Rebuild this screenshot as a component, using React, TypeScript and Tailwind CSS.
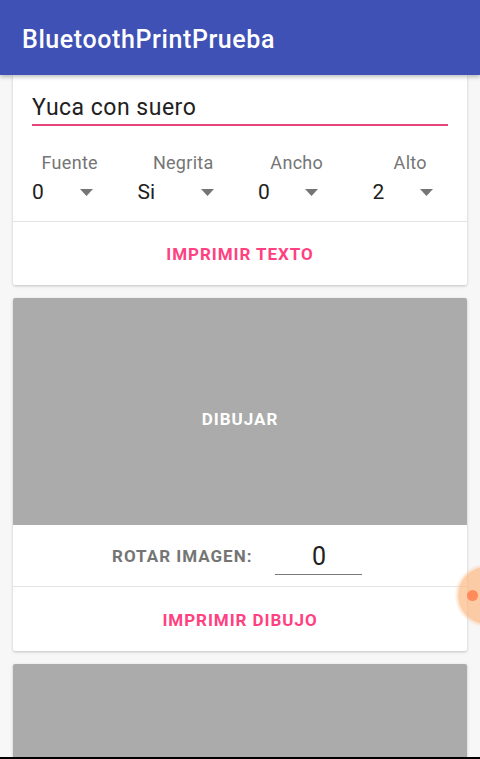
import React from "react";

function Arrow() {
  return (
    <svg width="13" height="7" viewBox="0 0 13 7" className="block">
      <path d="M0 0 L13 0 L6.5 7 Z" fill="#757575" />
    </svg>
  );
}

function Spinner({ value, box }: { value: string; box: string }) {
  return (
    <div className={`flex items-center justify-between ${box}`}>
      <span className="text-[21px] leading-[24px] text-[#212121]">{value}</span>
      <Arrow />
    </div>
  );
}

export default function App() {
  return (
    <div
      className="relative flex h-[759px] w-[480px] flex-col overflow-hidden bg-[#f7f7f7]"
      style={{ fontFamily: "Roboto, 'Noto Sans', sans-serif" }}
    >
      <div className="z-10 flex h-[75px] shrink-0 items-center bg-[#3F51B5] pl-[22px] pt-[4px] shadow-[0_2px_4px_rgba(0,0,0,0.25)]">
        <span className="text-[25px] font-medium leading-none tracking-[0.6px] text-white">BluetoothPrintPrueba</span>
      </div>
      <div className="flex flex-1 flex-col gap-[13px] overflow-hidden px-[13px]">
        {/* Card 1 */}
        <div className="shrink-0 rounded-b-[2px] bg-white shadow-[0_1px_3px_rgba(0,0,0,0.22)]">
          <div className="px-[19px] pt-[18px]">
            <div className="h-[30px] text-[23px] leading-[30px] tracking-[0.5px] text-[#212121]">Yuca con suero</div>
            <div className="mt-[1px] h-[2px] bg-[#E6457A]" />
          </div>
          <div className="mt-[27px] grid grid-cols-4 text-center text-[18px] leading-[20px] tracking-[0.3px] text-[#757575]">
            <span>Fuente</span>
            <span>Negrita</span>
            <span>Ancho</span>
            <span>Alto</span>
          </div>
          <div className="mt-[7px] grid grid-cols-4">
            <Spinner value="0" box="ml-[19px] w-[61px]" />
            <Spinner value="Si" box="ml-[11px] w-[76px]" />
            <Spinner value="0" box="ml-[18px] w-[60px]" />
            <Spinner value="2" box="ml-[19px] w-[60px]" />
          </div>
          <div className="mt-[17px] h-px bg-[#e4e4e4]" />
          <div className="flex h-[63px] items-center justify-center pt-[2px] text-[17px] font-bold tracking-[0.95px] text-[#FF4081]">
            IMPRIMIR TEXTO
          </div>
        </div>
        {/* Card 2 */}
        <div className="shrink-0 overflow-hidden rounded-[2px] bg-white shadow-[0_1px_3px_rgba(0,0,0,0.22)]">
          <div className="flex h-[227px] items-center justify-center bg-[#ababab] pt-[16px]">
            <span className="text-[17px] font-bold tracking-[1px] text-white">DIBUJAR</span>
          </div>
          <div className="flex h-[61px] items-center pl-[99px]">
            <span className="pt-[2px] text-[17px] font-bold tracking-[1px] text-[#757575]">ROTAR IMAGEN:</span>
            <div className="ml-[23px] flex w-[87px] flex-col items-center pt-[6px]">
              <span className="text-[25px] leading-[28px] text-[#212121]">0</span>
              <div className="mt-[3px] h-px w-full bg-[#7a7a7a]" />
            </div>
          </div>
          <div className="h-px bg-[#e4e4e4]" />
          <div className="flex h-[64px] items-center justify-center pt-[4px] text-[17px] font-bold tracking-[0.95px] text-[#FF4081]">
            IMPRIMIR DIBUJO
          </div>
        </div>
        {/* Card 3 */}
        <div className="h-[120px] shrink-0 rounded-[2px] bg-[#ababab] shadow-[0_1px_3px_rgba(0,0,0,0.22)]" />
      </div>
      <div className="h-[2px] shrink-0 bg-black" />
      {/* touch indicator */}
      <div className="absolute left-[458px] top-[567px] h-[57px] w-[57px] rounded-full bg-[rgba(252,180,120,0.65)] shadow-[0_0_2px_2px_rgba(252,190,140,0.4)]" />
      <div className="absolute left-[467px] top-[590px] h-[11px] w-[11px] rounded-full bg-[#ff8a5c]" />
    </div>
  );
}
